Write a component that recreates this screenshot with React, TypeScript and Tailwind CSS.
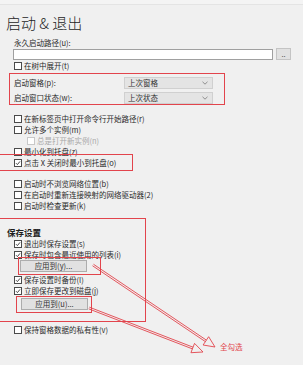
const RED = "#e2444c";

function Box({ checked, disabled }: { checked?: boolean; disabled?: boolean }) {
  return (
    <span
      className={`relative inline-block w-[8px] h-[8px] shrink-0 border bg-white ${
        disabled ? "border-[#c8c8c8]" : "border-[#4a4a4a]"
      }`}
    >
      {checked && (
        <svg className="absolute left-0 top-0" width="6" height="6" viewBox="0 0 6 6">
          <path d="M1 3.2 L2.4 4.6 L5 1.4" fill="none" stroke="#333" strokeWidth="0.9" />
        </svg>
      )}
    </span>
  );
}

function Check({
  label,
  checked,
  disabled,
  indent,
}: {
  label: string;
  checked?: boolean;
  disabled?: boolean;
  indent?: boolean;
}) {
  return (
    <div className={`flex items-center h-[11px] gap-[2px] ${indent ? "pl-[27px]" : "pl-[14px]"}`}>
      <Box checked={checked} disabled={disabled} />
      <span className={`leading-[11px] ${disabled ? "text-[#a8a8a8]" : "text-[#2a2a2a]"}`}>{label}</span>
    </div>
  );
}

function Select({ label, value, top }: { label: string; value: string; top: string }) {
  return (
    <div className={`flex items-center h-[12px] ${top}`}>
      <span className="pl-[14px] w-[124px] text-[#2a2a2a] leading-[12px]">{label}</span>
      <div className="flex items-center justify-between w-[89px] h-[12px] bg-[#e4e4e4] border border-[#d0d0d0] pl-[3px] pr-[4px]">
        <span className="text-[#333] leading-[10px]">{value}</span>
        <svg width="6" height="4" viewBox="0 0 6 4">
          <path d="M0.5 0.8 L3 3.2 L5.5 0.8" fill="none" stroke="#777" strokeWidth="0.8" />
        </svg>
      </div>
    </div>
  );
}

function Btn({ label, left, top }: { label: string; left: string; top: string }) {
  return (
    <div
      className={`flex items-center justify-center w-[67px] h-[12px] bg-[#e1e1e1] border border-[#adadad] text-[#333] leading-[10px] ${left} ${top}`}
    >
      {label}
    </div>
  );
}

function Arrow({ x1, y1, x2, y2 }: { x1: number; y1: number; x2: number; y2: number }) {
  const dx = x2 - x1;
  const dy = y2 - y1;
  const len = Math.hypot(dx, dy);
  const ux = dx / len;
  const uy = dy / len;
  const nx = -uy;
  const ny = ux;
  const hl = 11;
  const hw = 5;
  const bx = x2 - ux * hl;
  const by = y2 - uy * hl;
  const o = 0.9;
  return (
    <g fill="none" stroke={RED} strokeWidth="0.9">
      <line x1={x1 + nx * o} y1={y1 + ny * o} x2={bx + nx * o} y2={by + ny * o} />
      <line x1={x1 - nx * o} y1={y1 - ny * o} x2={bx - nx * o} y2={by - ny * o} />
      <polygon points={`${x2},${y2} ${bx + nx * hw},${by + ny * hw} ${bx - nx * hw},${by - ny * hw}`} />
    </g>
  );
}

export default function App() {
  return (
    <div className="relative w-[303px] h-[365px] overflow-hidden bg-[#f0f0f0] text-[7.5px] [font-family:'Noto_Sans_CJK_SC','Noto_Sans',sans-serif]">
      <div className="h-[5px] bg-[#f4f4f4] border-b border-[#e4e4e4]" />

      <div className="mt-[6px] h-[23px] pl-[6px] text-[15px] leading-[23px] font-light text-[#1e1e1e]">
        启动 &amp; 退出
      </div>

      <div className="mt-[3px] pl-[14px] h-[11px] leading-[11px] text-[#2a2a2a]">永久启动路径(u):</div>
      <div className="flex items-center">
        <div className="ml-[13px] w-[260px] h-[11px] bg-white border border-[#a0a0a0]" />
        <div className="ml-[3px] w-[15px] h-[12px] bg-[#e1e1e1] border border-[#c4c4c4] flex items-center justify-center text-[#555] leading-[8px]">
          ..
        </div>
      </div>

      <Check label="在树中展开(t)" />

      <Select label="启动窗格(p):" value="上次窗格" top="mt-[6px]" />
      <Select label="启动窗口状态(w):" value="上次状态" top="mt-[3px]" />

      <div className="mt-[9px]">
        <Check label="在新标签页中打开命令行开始路径(r)" />
        <Check label="允许多个实例(m)" />
        <Check label="总是打开新实例(n)" disabled indent />
        <Check label="最小化到托盘(z)" />
        <Check label="点击 X 关闭时最小到托盘(o)" checked />
      </div>

      <div className="mt-[10px]">
        <Check label="启动时不浏览网络位置(b)" />
        <Check label="在启动时重新连接映射的网络驱动器(2)" />
        <Check label="启动时检查更新(k)" />
      </div>

      <div className="mt-[15px] pl-[7px] h-[12px] leading-[12px] text-[8.5px] font-bold text-[#1e1e1e]">保存设置</div>
      <Check label="退出时保存设置(s)" checked />
      <Check label="保存时包含最近使用的列表(i)" checked />
      <Btn label="应用到(y)..." left="ml-[20px]" top="mt-0" />
      <div className="mt-[2px]">
        <Check label="保存设置时备份(l)" checked />
        <Check label="立即保存更改到磁盘(j)" checked />
      </div>
      <Btn label="应用到(u)..." left="ml-[21px]" top="mt-[2px]" />

      <div className="mt-[14px]">
        <Check label="保持窗格数据的私有性(v)" />
      </div>

      {/* annotations */}
      <div className="absolute left-[9px] top-[73px] w-[216px] h-[32px] border-[1.5px] border-[#e2444c]" />
      <div className="absolute left-[-2px] top-[154px] w-[135px] h-[17px] border-[1.5px] border-[#e2444c]" />
      <div className="absolute left-[-2px] top-[218px] w-[148px] h-[104px] border-[1.5px] border-[#e2444c]" />
      <div className="absolute left-[18px] top-[257px] w-[83px] h-[18px] border-[1.5px] border-[#e2444c]" />
      <div className="absolute left-[16px] top-[296px] w-[76px] h-[17px] border-[1.5px] border-[#e2444c]" />
      <svg className="absolute left-0 top-0" width="303" height="365">
        <Arrow x1={93} y1={265} x2={215} y2={347} />
        <Arrow x1={89} y1={308} x2={203} y2={352} />
      </svg>
      <div className="absolute left-[220px] top-[342px] text-[7.5px] leading-[10px] text-[#e2444c]">全勾选</div>
    </div>
  );
}
